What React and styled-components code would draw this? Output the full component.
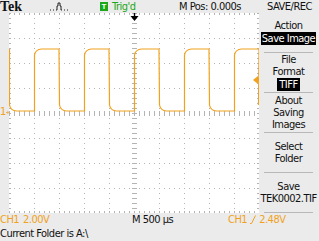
import React from 'react';
import styled, { createGlobalStyle } from 'styled-components';

const GlobalStyle = createGlobalStyle`
  html, body {
    margin: 0;
    padding: 0;
    background: #ebebeb;
  }
`;

const ORANGE = '#f0a21e';
const GREEN = '#1aa81a';
const GRID = '#b4b4b4';

const Screen = styled.div`
  width: 319px;
  height: 241px;
  overflow: hidden;
  background: #ebebeb;
  color: #111;
  font-family: "DejaVu Sans Condensed", "DejaVu Sans", sans-serif;
  font-stretch: condensed;
  font-size: 11px;
  letter-spacing: -0.5px;
  display: flex;
  flex-direction: column;
`;

const TopBar = styled.div`
  height: 13px;
  display: grid;
  grid-template-columns: 50px 50px 12px 67px 81px 59px;
  align-items: center;
  line-height: 13px;
  white-space: nowrap;
`;

const Logo = styled.span`
  font-family: "Liberation Serif", serif;
  font-weight: bold;
  font-size: 14px;
  letter-spacing: 0;
`;

const PulseIcon = styled.svg`
  width: 18px;
  height: 9px;
  display: block;
`;

const TrigBox = styled.span`
  width: 8px;
  height: 9px;
  background: ${GREEN};
  color: #fff;
  font-family: "Liberation Sans", sans-serif;
  font-weight: bold;
  font-size: 8px;
  letter-spacing: 0;
  line-height: 9px;
  text-align: center;
`;

const TrigText = styled.span`
  color: ${GREEN};
`;

const MenuTitle = styled.span`
  text-align: center;
`;

const Middle = styled.div`
  display: flex;
  height: 200px;
`;

const Gutter = styled.div`
  width: 9px;
  flex-shrink: 0;
  padding-top: 93px;
  display: flex;
  align-items: center;
  height: 12px;
  color: ${ORANGE};
  line-height: 12px;
`;

const Graticule = styled.svg`
  width: 250px;
  height: 200px;
  flex-shrink: 0;
  display: block;
  background: #fff;
`;

const Menu = styled.div`
  width: 60px;
  display: flex;
  flex-direction: column;
`;

const MenuGroup = styled.div`
  height: 40px;
  margin: 0 6px 0 5px;
  border-bottom: 1px solid #b8b8b8;
  box-sizing: border-box;
  display: flex;
  flex-direction: column;
  align-items: center;
  justify-content: center;
  line-height: 12px;
  white-space: nowrap;
`;

const Inverse = styled.span`
  background: #000;
  color: #fff;
  padding: 0 ${(p) => (p.$wide ? '1px' : '2px')};
  line-height: 13px;
`;

const StatusRow = styled.div`
  height: 13px;
  line-height: 13px;
  display: grid;
  grid-template-columns: 23px 109px 96px 1fr;
  white-space: nowrap;
`;

const Reading = styled.span`
  display: flex;
  align-items: center;
  gap: 3px;
  color: ${(p) => (p.$orange ? ORANGE : '#111')};
`;

const SlopeIcon = styled.svg`
  width: 6px;
  height: 9px;
  display: block;
`;

const FolderRow = styled.div`
  line-height: 13px;
  margin-top: 1px;
`;

function gridMarks() {
  const marks = [];
  // dotted major divisions
  for (let i = 1; i < 10; i++) {
    if (i === 5) continue;
    for (let y = 5; y < 200; y += 5) {
      marks.push(<rect key={`v${i}-${y}`} x={i * 25} y={y} width="1" height="1" />);
    }
  }
  for (let j = 1; j < 8; j++) {
    if (j === 4) continue;
    for (let x = 5; x < 250; x += 5) {
      marks.push(<rect key={`h${j}-${x}`} x={x} y={j * 25} width="1" height="1" />);
    }
  }
  // centre lines and border with ticks
  for (let y = 0; y < 200; y += 5) {
    marks.push(<rect key={`cv${y}`} x={123} y={y} width="5" height="1" />);
    marks.push(<rect key={`lv${y}`} x={0} y={y} width="2" height="1" />);
    marks.push(<rect key={`rv${y}`} x={248} y={y} width="2" height="1" />);
  }
  for (let x = 0; x < 250; x += 5) {
    marks.push(<rect key={`ch${x}`} x={x} y={98} width="1" height="5" />);
    marks.push(<rect key={`th${x}`} x={x} y={0} width="1" height="2" />);
    marks.push(<rect key={`bh${x}`} x={x} y={198} width="1" height="2" />);
  }
  return marks;
}

function wavePath() {
  let d = 'M0.5,36';
  for (let p = 0; p < 5; p++) {
    const x = p * 50 + 0.5;
    d += ` L${x},92 Q${x + 1},97.5 ${x + 7},98 L${x + 25},98 L${x + 25},42 Q${x + 26},36.5 ${x + 32},36 L${x + 49.5},36`;
  }
  d += ' L249.5,92';
  return d;
}

export default function App() {
  return (
    <Screen>
      <GlobalStyle />
      <TopBar>
        <Logo>Tek</Logo>
        <PulseIcon viewBox="0 0 18 9">
          <path d="M0,8 H1 M3,8 H4 M6,8 H7 V4 H8 V1 H10 V4 H11 V8 H12 M14,8 H15 M17,8 H18" stroke="#222" strokeWidth="1" fill="none" />
        </PulseIcon>
        <TrigBox>T</TrigBox>
        <TrigText>Trig'd</TrigText>
        <span>M Pos: 0.000s</span>
        <MenuTitle>SAVE/REC</MenuTitle>
      </TopBar>
      <Middle>
        <Gutter>
          <span>1</span>
          <svg width="5" height="7" viewBox="0 0 5 7">
            <path d="M0,3.5 H4 M2,1 L4.5,3.5 L2,6" stroke={ORANGE} strokeWidth="1.2" fill="none" />
          </svg>
        </Gutter>
        <Graticule viewBox="0 0 250 200">
          <g fill={GRID}>{gridMarks()}</g>
          <path d={wavePath()} stroke={ORANGE} strokeWidth="1.2" fill="none" />
          <path d="M125.5,0 V4" stroke="#000" strokeWidth="1.4" />
          <polygon points="121.5,3 129.5,3 125.5,8" fill="#000" />
          <polygon points="244,67 249,63 249,71" fill={ORANGE} />
          <path d="M247,67 H250" stroke={ORANGE} strokeWidth="2" />
        </Graticule>
        <Menu>
          <MenuGroup>
            <span>Action</span>
            <Inverse $wide>Save Image</Inverse>
          </MenuGroup>
          <MenuGroup>
            <span>File</span>
            <span>Format</span>
            <Inverse>TIFF</Inverse>
          </MenuGroup>
          <MenuGroup>
            <span>About</span>
            <span>Saving</span>
            <span>Images</span>
          </MenuGroup>
          <MenuGroup>
            <span>Select</span>
            <span>Folder</span>
          </MenuGroup>
          <MenuGroup>
            <span>Save</span>
            <span>TEK0002.TIF</span>
          </MenuGroup>
        </Menu>
      </Middle>
      <StatusRow>
        <Reading $orange>CH1</Reading>
        <Reading $orange>2.00V</Reading>
        <Reading>M 500 µs</Reading>
        <Reading $orange>
          CH1
          <SlopeIcon viewBox="0 0 6 9">
            <path d="M0,8.5 H1.5 L5.5,0.5" stroke={ORANGE} strokeWidth="1" fill="none" />
          </SlopeIcon>
          2.48V
        </Reading>
      </StatusRow>
      <FolderRow>Current Folder is A:\</FolderRow>
    </Screen>
  );
}
